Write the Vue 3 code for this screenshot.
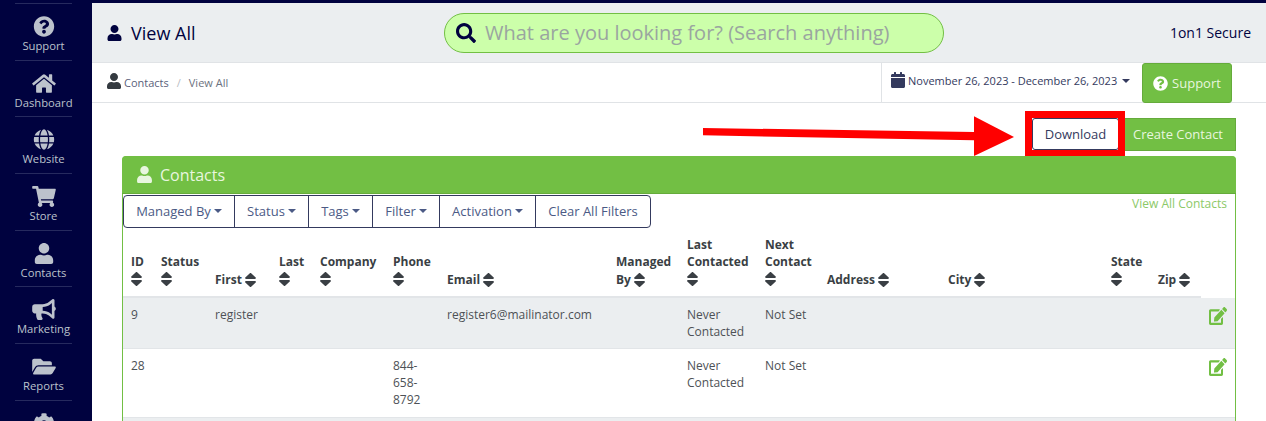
<script setup>
const P = {
  user: ['0 0 448 512', 'M224 256c70.7 0 128-57.3 128-128S294.7 0 224 0 96 57.3 96 128s57.3 128 128 128zm89.6 32h-16.7c-22.2 10.2-46.9 16-72.9 16s-50.6-5.8-72.9-16h-16.7C60.2 288 0 348.2 0 422.4V464c0 26.5 21.5 48 48 48h352c26.5 0 48-21.5 48-48v-41.6c0-74.2-60.2-134.4-134.4-134.4z'],
  search: ['0 0 512 512', 'M505 442.7L405.3 343c-4.5-4.5-10.6-7-17-7H372c27.6-35.3 44-79.7 44-128C416 93.1 322.9 0 208 0S0 93.1 0 208s93.1 208 208 208c48.3 0 92.7-16.4 128-44v16.3c0 6.4 2.5 12.5 7 17l99.7 99.7c9.4 9.4 24.6 9.4 33.9 0l28.3-28.3c9.4-9.4 9.4-24.6.1-34zM208 336c-70.7 0-128-57.2-128-128 0-70.7 57.2-128 128-128 70.7 0 128 57.2 128 128 0 70.7-57.2 128-128 128z'],
  question: ['0 0 512 512', 'M504 256c0 136.997-111.043 248-248 248S8 392.997 8 256C8 119.083 119.043 8 256 8s248 111.083 248 248zM262.655 90c-54.497 0-89.255 22.957-116.549 63.758-3.536 5.286-2.353 12.415 2.715 16.258l34.699 26.31c5.205 3.947 12.621 3.008 16.665-2.122 17.864-22.658 30.113-35.797 57.303-35.797 20.429 0 45.698 13.148 45.698 32.958 0 14.976-12.363 22.667-32.534 33.976C247.128 238.528 216 254.941 216 296v4c0 6.627 5.373 12 12 12h56c6.627 0 12-5.373 12-12v-1.333c0-28.462 83.186-29.647 83.186-106.667 0-58.002-60.165-102-116.531-102zM256 338c-25.365 0-46 20.635-46 46 0 25.364 20.635 46 46 46s46-20.636 46-46c0-25.365-20.635-46-46-46z'],
  home: ['0 0 576 512', 'M280.37 148.26L96 300.11V464a16 16 0 0 0 16 16l112.06-.29a16 16 0 0 0 15.92-16V368a16 16 0 0 1 16-16h64a16 16 0 0 1 16 16v95.64a16 16 0 0 0 16 16.05L464 480a16 16 0 0 0 16-16V300L295.67 148.26a12.19 12.19 0 0 0-15.3 0zM571.6 251.47L488 182.56V44.05a12 12 0 0 0-12-12h-56a12 12 0 0 0-12 12v72.61L318.47 43a48 48 0 0 0-61 0L4.34 251.47a12 12 0 0 0-1.6 16.9l25.5 31A12 12 0 0 0 45.15 301l235.22-193.74a12.19 12.19 0 0 1 15.3 0L530.9 301a12 12 0 0 0 16.9-1.6l25.5-31a12 12 0 0 0-1.7-16.93z'],
  globe: ['0 0 496 512', 'M336.5 160C322 70.7 287.8 8 248 8s-74 62.7-88.5 152h177zM152 256c0 22.2 1.2 43.5 3.3 64h185.3c2.1-20.5 3.3-41.8 3.3-64s-1.2-43.5-3.3-64H155.3c-2.1 20.5-3.3 41.8-3.3 64zm324.7-96c-28.6-67.9-86.5-120.4-158-141.6 24.4 33.8 41.2 84.7 50 141.6h108zM177.2 18.4C105.8 39.6 47.8 92.1 19.3 160h108c8.7-56.9 25.5-107.8 49.9-141.6zM487.4 192H372.7c2.1 21 3.3 42.5 3.3 64s-1.2 43-3.3 64h114.6c5.5-20.5 8.6-41.8 8.6-64s-3.1-43.5-8.5-64zM120 256c0-21.5 1.2-43 3.3-64H8.6C3.2 212.5 0 233.8 0 256s3.2 43.5 8.6 64h114.6c-2-21-3.2-42.5-3.2-64zm39.5 96c14.5 89.3 48.7 152 88.5 152s74-62.7 88.5-152h-177zm159.3 141.6c71.4-21.2 129.4-73.7 158-141.6h-108c-8.8 56.9-25.6 107.8-50 141.6zM19.3 352c28.6 67.9 86.5 120.4 158 141.6-24.4-33.8-41.2-84.7-50-141.6h-108z'],
  cart: ['0 0 576 512', 'M528.12 301.319l47.273-208C578.806 78.301 567.391 64 551.99 64H159.208l-9.166-44.81C147.758 8.021 137.93 0 126.529 0H24C10.745 0 0 10.745 0 24v16c0 13.255 10.745 24 24 24h69.883l70.248 343.435C147.325 417.1 136 435.222 136 456c0 30.928 25.072 56 56 56s56-25.072 56-56c0-15.674-6.447-29.835-16.824-40h209.647C430.447 426.165 424 440.326 424 456c0 30.928 25.072 56 56 56s56-25.072 56-56c0-22.172-12.888-41.332-31.579-50.405l5.517-24.276c3.413-15.018-8.002-29.319-23.403-29.319H218.117l-6.545-32h293.145c11.206 0 20.92-7.754 23.403-18.681z'],
  bullhorn: ['0 0 576 512', 'M576 240c0-23.63-12.95-44.04-32-55.12V32.01C544 23.26 537.02 0 512 0c-7.12 0-14.19 2.38-19.98 7.02l-85.03 68.03C364.28 109.19 310.66 128 256 128H64c-35.35 0-64 28.65-64 64v96c0 35.35 28.65 64 64 64h33.7c-1.39 10.48-2.18 21.14-2.18 32 0 39.77 9.26 77.35 25.56 110.94 5.19 10.69 16.52 17.06 28.4 17.06h74.28c26.05 0 41.69-29.84 25.9-50.56-16.4-21.52-26.15-48.36-26.15-77.44 0-11.11 1.62-21.79 4.41-32H256c54.66 0 108.28 18.81 150.98 52.95l85.03 68.03a32.023 32.023 0 0 0 19.98 7.02c24.92 0 32-22.78 32-32V295.13C563.05 284.04 576 263.63 576 240zm-96 141.42l-33.05-26.44C392.95 311.78 325.12 288 256 288v-96c69.12 0 136.95-23.78 190.95-66.98L480 98.58v282.84z'],
  folder: ['0 0 576 512', 'M572.694 292.093L500.27 416.248A63.997 63.997 0 0 1 444.989 448H45.025c-18.523 0-30.064-20.093-20.731-36.093l72.424-124.155A64 64 0 0 1 152 256h399.964c18.523 0 30.064 20.093 20.73 36.093zM152 224h328v-48c0-26.51-21.49-48-48-48H272l-64-64H48C21.49 64 0 85.49 0 112v278.046l69.077-118.418C86.214 242.25 117.989 224 152 224z'],
  cog: ['0 0 512 512', 'M487.4 315.7l-42.6-24.6c4.3-23.2 4.3-47 0-70.2l42.6-24.6c4.9-2.8 7.1-8.6 5.5-14-11.1-35.6-30-67.8-54.7-94.6-3.8-4.1-10-5.1-14.8-2.3L380.8 110c-17.9-15.4-38.5-27.3-60.8-35.1V25.8c0-5.6-3.9-10.5-9.4-11.7-36.7-8.2-74.3-7.8-109.2 0-5.5 1.2-9.4 6.1-9.4 11.7V75c-22.2 7.9-42.8 19.8-60.8 35.1L88.7 85.5c-4.9-2.8-11-1.9-14.8 2.3-24.7 26.7-43.6 58.9-54.7 94.6-1.7 5.4.6 11.2 5.5 14L67.3 221c-4.3 23.2-4.3 47 0 70.2l-42.6 24.6c-4.9 2.8-7.1 8.6-5.5 14 11.1 35.6 30 67.8 54.7 94.6 3.8 4.1 10 5.1 14.8 2.3l42.6-24.6c17.9 15.4 38.5 27.3 60.8 35.1v49.2c0 5.6 3.9 10.5 9.4 11.7 36.7 8.2 74.3 7.8 109.2 0 5.5-1.2 9.4-6.1 9.4-11.7v-49.2c22.2-7.9 42.8-19.8 60.8-35.1l42.6 24.6c4.9 2.8 11 1.9 14.8-2.3 24.7-26.7 43.6-58.9 54.7-94.6 1.5-5.5-.7-11.3-5.6-14.1zM256 336c-44.1 0-80-35.9-80-80s35.9-80 80-80 80 35.9 80 80-35.9 80-80 80z'],
  calendar: ['0 0 448 512', 'M0 464c0 26.5 21.5 48 48 48h352c26.5 0 48-21.5 48-48V192H0v272zM400 64h-48V16c0-8.8-7.2-16-16-16h-32c-8.8 0-16 7.2-16 16v48H160V16c0-8.8-7.2-16-16-16h-32c-8.8 0-16 7.2-16 16v48H48C21.5 64 0 85.5 0 112v48h448v-48c0-26.5-21.5-48-48-48z'],
  edit: ['0 0 576 512', 'M402.6 83.2l90.2 90.2c3.8 3.8 3.8 10 0 13.8L274.4 405.6l-92.8 10.3c-12.4 1.4-22.9-9.1-21.5-21.5l10.3-92.8L388.8 83.2c3.8-3.8 10-3.8 13.8 0zm162-22.9l-48.8-48.8c-15.2-15.2-39.9-15.2-55.2 0l-35.4 35.4c-3.8 3.8-3.8 10 0 13.8l90.2 90.2c3.8 3.8 10 3.8 13.8 0l35.4-35.4c15.2-15.3 15.2-40 0-55.2zM384 346.2V448H64V128h229.8c3.2 0 6.2-1.3 8.5-3.5l40-40c7.6-7.6 2.2-20.5-8.5-20.5H48C21.5 64 0 85.5 0 112v352c0 26.5 21.5 48 48 48h352c26.5 0 48-21.5 48-48V306.2c0-10.7-12.9-16-20.5-8.5l-40 40c-2.2 2.3-3.5 5.3-3.5 8.5z'],
  sort: ['16 56 288 400', 'M41 288h238c21.4 0 32.1 25.9 17 41L177 448c-9.4 9.4-24.6 9.4-33.9 0L24 329c-15.1-15.1-4.4-41 17-41zm255-105L177 64c-9.4-9.4-24.6-9.4-33.9 0L24 183c-15.1 15.1-4.4 41 17 41h238c21.4 0 32.1-25.9 17-41z']
}
const nav = [
  ['question', 'Support'], ['home', 'Dashboard'], ['globe', 'Website'], ['cart', 'Store'],
  ['user', 'Contacts'], ['bullhorn', 'Marketing'], ['folder', 'Reports'], ['cog', '']
]
const filters = [['Managed By', 110], ['Status', 74], ['Tags', 64], ['Filter', 67], ['Activation', 96]]
const cols = [
  { w: 30, l: ['ID'], br: true }, { w: 54, l: ['Status'], br: true }, { w: 64, l: ['First'] },
  { w: 41, l: ['Last'], br: true }, { w: 73, l: ['Company'], br: true }, { w: 54, l: ['Phone'], br: true },
  { w: 169, l: ['Email'] }, { w: 71, l: ['Managed', 'By'] }, { w: 78, l: ['Last', 'Contacted'], br: true },
  { w: 62, l: ['Next', 'Contact'], br: true }, { w: 121, l: ['Address'] }, { w: 163, l: ['City'] },
  { w: 47, l: ['State'], br: true }, { w: 51, l: ['Zip'] }
]
const rows = [
  { id: '9', first: 'register', phone: [], email: 'register6@mailinator.com' },
  { id: '28', first: '', phone: ['844-', '658-', '8792'], email: '' }
]
</script>

<template>
  <div class="page">
    <aside class="side">
      <div v-for="n in nav" :key="n[0]" class="nav">
        <svg class="nav-ic" :viewBox="P[n[0]][0]"><path :d="P[n[0]][1]" /></svg>
        <span v-if="n[1]">{{ n[1] }}</span>
      </div>
    </aside>
    <main class="main">
      <header class="top">
        <div class="title">
          <svg class="ti" :viewBox="P.user[0]"><path :d="P.user[1]" /></svg>
          <span>View All</span>
        </div>
        <div class="search">
          <svg class="si" :viewBox="P.search[0]"><path :d="P.search[1]" /></svg>
          <span>What are you looking for? (Search anything)</span>
        </div>
        <div class="brand">1on1 Secure</div>
      </header>
      <div class="crumbs">
        <div class="trail">
          <svg class="ci" :viewBox="P.user[0]"><path :d="P.user[1]" /></svg>
          <span class="c1">Contacts</span><span class="sep">/</span><span class="c2">View All</span>
        </div>
        <div class="range">
          <svg class="cal" :viewBox="P.calendar[0]"><path :d="P.calendar[1]" /></svg>
          <span>November 26, 2023 - December 26, 2023</span><i class="caret"></i>
        </div>
        <div class="support">
          <svg class="qi" :viewBox="P.question[0]"><path :d="P.question[1]" /></svg>
          <span>Support</span>
        </div>
      </div>
      <div class="content">
        <div class="actions">
          <div class="dl">Download</div>
          <div class="cc">Create Contact</div>
        </div>
        <section class="panel">
          <div class="phead">
            <svg class="pi" :viewBox="P.user[0]"><path :d="P.user[1]" /></svg>
            <span>Contacts</span>
          </div>
          <div class="tools">
            <div class="group">
              <div v-for="f in filters" :key="f[0]" class="fb" :style="{ width: f[1] + 'px' }">{{ f[0] }}<i class="caret"></i></div>
              <div class="fb" style="width:115px">Clear All Filters</div>
            </div>
            <span class="all">View All Contacts</span>
          </div>
          <div class="table">
            <div class="thead">
              <div v-for="c in cols" :key="c.l.join()" class="th" :class="{ low: !c.br }" :style="{ width: c.w + 'px' }">
                <template v-for="(t, i) in c.l" :key="t">
                  <template v-if="i">
                    <br />
                  </template>{{ t }}</template>
                <template v-if="c.br">
                  <br />
                </template>
                <svg class="sort" :class="{ inl: !c.br }" :viewBox="P.sort[0]" preserveAspectRatio="none"><path :d="P.sort[1]" /></svg>
              </div>
            </div>
            <div v-for="r in rows" :key="r.id" class="tr">
              <div class="td" style="width:30px">{{ r.id }}</div>
              <div class="td" style="width:54px"></div>
              <div class="td" style="width:64px">{{ r.first }}</div>
              <div class="td" style="width:41px"></div>
              <div class="td" style="width:73px"></div>
              <div class="td" style="width:54px"><div v-for="p in r.phone" :key="p">{{ p }}</div></div>
              <div class="td" style="width:169px">{{ r.email }}</div>
              <div class="td" style="width:71px"></div>
              <div class="td" style="width:78px">Never<br />Contacted</div>
              <div class="td" style="width:62px">Not Set</div>
              <div class="td fill"></div>
              <svg class="edit" :viewBox="P.edit[0]" preserveAspectRatio="none"><path :d="P.edit[1]" /></svg>
            </div>
            <div class="tr stub"></div>
          </div>
        </section>
      </div>
    </main>
    <svg class="arrow" viewBox="0 0 320 46" width="320" height="46">
      <path d="M0 15 L271 19 L271 3.3 L311 24 L271 43 L271 27.3 L0 22.3 Z" fill="#ff0000" />
    </svg>
    <div class="redbox"></div>
  </div>
</template>

<style scoped>
.page {
  position: relative;
  display: flex;
  width: 1266px;
  height: 421px;
  overflow: hidden;
  background: #fff;
  font-family: "Open Sans", sans-serif;
  color: #3c4043;
}
.side {
  width: 92px;
  flex: none;
  box-sizing: border-box;
  background: #00023f;
  padding: 3px 20px 0 15px;
}
.nav {
  height: 56.67px;
  box-sizing: border-box;
  border-top: 1px solid #262a5e;
  display: flex;
  flex-direction: column;
  align-items: center;
  color: #bcc2cc;
  font-size: 11.25px;
  line-height: 16px;
  white-space: nowrap;
  padding-top: 12px;
}
.nav-ic {
  height: 21px;
  width: 24px;
  fill: #bcc2cc;
  flex: none;
  margin-bottom: 1px;
}
.main {
  flex: 1;
  min-width: 0;
  border-top: 3px solid #00023f;
}
.top {
  height: 60px;
  box-sizing: border-box;
  background: #ebeef0;
  border-bottom: 1px solid #e0e3e6;
  display: flex;
  align-items: center;
  position: relative;
}
.title {
  display: flex;
  align-items: center;
  margin-left: 15px;
  width: 337px;
  color: #00023f;
  font-size: 18px;
}
.ti {
  width: 15px;
  height: 16px;
  fill: #00023f;
  margin-right: 9px;
}
.search {
  width: 500px;
  height: 40px;
  box-sizing: border-box;
  border: 1px solid #72bf44;
  border-radius: 20px;
  background: #ccffaa;
  display: flex;
  align-items: center;
  padding-left: 11px;
  color: #9aa5a0;
  font-size: 20px;
  white-space: nowrap;
}
.si {
  width: 20px;
  height: 20px;
  fill: #00023f;
  margin-right: 9px;
  flex: none;
}
.brand {
  margin-left: auto;
  margin-right: 15px;
  color: #00023f;
  font-size: 14px;
}
.crumbs {
  height: 40px;
  box-sizing: border-box;
  border-bottom: 1px solid #e0e3e6;
  display: flex;
  position: relative;
}
.trail {
  width: 789px;
  box-sizing: border-box;
  padding-left: 15px;
  display: flex;
  align-items: center;
  font-size: 11px;
  color: #5a5f7a;
}
.ci {
  width: 14px;
  height: 16px;
  fill: #343a40;
  margin: -4px 3px 0 0;
}
.sep {
  margin: 0 8px;
  color: #b8bcc4;
}
.c2 {
  color: #6c7280;
}
.range {
  width: 261px;
  box-sizing: border-box;
  border-left: 1px solid #e0e3e6;
  padding: 0 0 4px 9px;
  display: flex;
  align-items: center;
  font-size: 11px;
  color: #343a5e;
  white-space: nowrap;
}
.cal {
  width: 14px;
  height: 16px;
  fill: #343a5e;
  margin: -1px 3px 0 0;
}
.caret {
  display: inline-block;
  width: 0;
  height: 0;
  margin-left: 3px;
  vertical-align: 2px;
  border-top: 4px solid currentColor;
  border-left: 4px solid transparent;
  border-right: 4px solid transparent;
}
.range .caret {
  margin-left: 5px;
}
.support {
  width: 90px;
  height: 40px;
  box-sizing: border-box;
  border: 1px solid #65ab3b;
  border-radius: 3px;
  background: #72bf44;
  color: #e8f6df;
  font-size: 13px;
  display: flex;
  align-items: center;
  justify-content: center;
  gap: 4px;
}
.qi {
  width: 15px;
  height: 15px;
  fill: #fff;
}
.content {
  padding: 15px 30px 0;
}
.actions {
  display: flex;
  justify-content: flex-end;
  height: 38px;
  font-size: 13px;
}
.dl {
  width: 87px;
  height: 32px;
  box-sizing: border-box;
  border: 1px solid #343a5e;
  border-radius: 3px;
  color: #343a5e;
  display: flex;
  align-items: center;
  justify-content: center;
  margin-right: 1px;
}
.cc {
  width: 116px;
  height: 33px;
  box-sizing: border-box;
  padding-bottom: 1px;
  background: #72bf44;
  border: 1px solid #65ab3b;
  color: #e8f6df;
  display: flex;
  align-items: center;
  justify-content: center;
}
.panel {
  width: 1114px;
  box-sizing: border-box;
  border: 1px solid #72bf44;
  border-radius: 4px 4px 0 0;
}
.phead {
  height: 38px;
  box-sizing: border-box;
  margin: -1px -1px 0;
  background: #72bf44;
  border-bottom: 1px solid #65ab3b;
  border-radius: 4px 4px 0 0;
  display: flex;
  align-items: center;
  padding-left: 15px;
  color: #e8f6df;
  font-size: 16px;
}
.pi {
  width: 15px;
  height: 17px;
  fill: #e8f6df;
  margin-right: 8px;
}
.tools {
  display: flex;
  justify-content: space-between;
}
.group {
  display: flex;
  height: 33px;
  margin-top: 1px;
  box-sizing: border-box;
  border: 1px solid #343a5e;
  border-radius: 4px;
  font-size: 13px;
  color: #4b5a85;
}
.fb {
  display: flex;
  align-items: center;
  justify-content: center;
  box-sizing: border-box;
  padding-bottom: 1px;
  border-left: 1px solid #343a5e;
  white-space: nowrap;
}
.fb:first-child {
  border-left: 0;
}
.all {
  color: #8cc968;
  font-size: 12px;
  margin: 1px 8px 0 0;
  line-height: 17px;
}
.thead {
  display: flex;
  align-items: flex-end;
  width: 1078px;
  height: 70px;
  box-sizing: border-box;
  border-bottom: 2px solid #e2e5e8;
}
.th {
  flex: none;
  box-sizing: border-box;
  padding: 0 0 9px 8px;
  font-size: 12px;
  line-height: 17px;
  font-weight: 700;
  color: #3a3f44;
  white-space: nowrap;
}
.th.low {
  padding-bottom: 8px;
}
.sort {
  width: 11px;
  height: 14px;
  fill: #3a3f44;
  vertical-align: -3px;
}
.sort.inl {
  margin: 3px 0 0 3px;
}
.tr {
  display: flex;
  background: #fff;
  border-bottom: 1px solid #e2e5e8;
  position: relative;
}
.tr:nth-child(2) {
  background: #ebeef0;
}
.tr + .tr:not(.stub) {
  padding-bottom: 1px;
}
.stub {
  height: 12px;
  background: #ebeef0;
  border: 0;
}
.td {
  flex: none;
  box-sizing: border-box;
  padding: 8px 0 8px 8px;
  font-size: 12px;
  line-height: 17px;
  color: #4d5156;
  white-space: nowrap;
}
.td.fill {
  flex: 1;
}
.edit {
  position: absolute;
  right: 8px;
  top: 9px;
  width: 18px;
  height: 18px;
  fill: #72bf44;
}
.arrow {
  position: absolute;
  left: 703px;
  top: 113px;
}
.redbox {
  position: absolute;
  left: 1025px;
  top: 111px;
  width: 100px;
  height: 45px;
  box-sizing: border-box;
  border: 7px solid #ff0000;
  border-bottom-width: 6px;
}
</style>
